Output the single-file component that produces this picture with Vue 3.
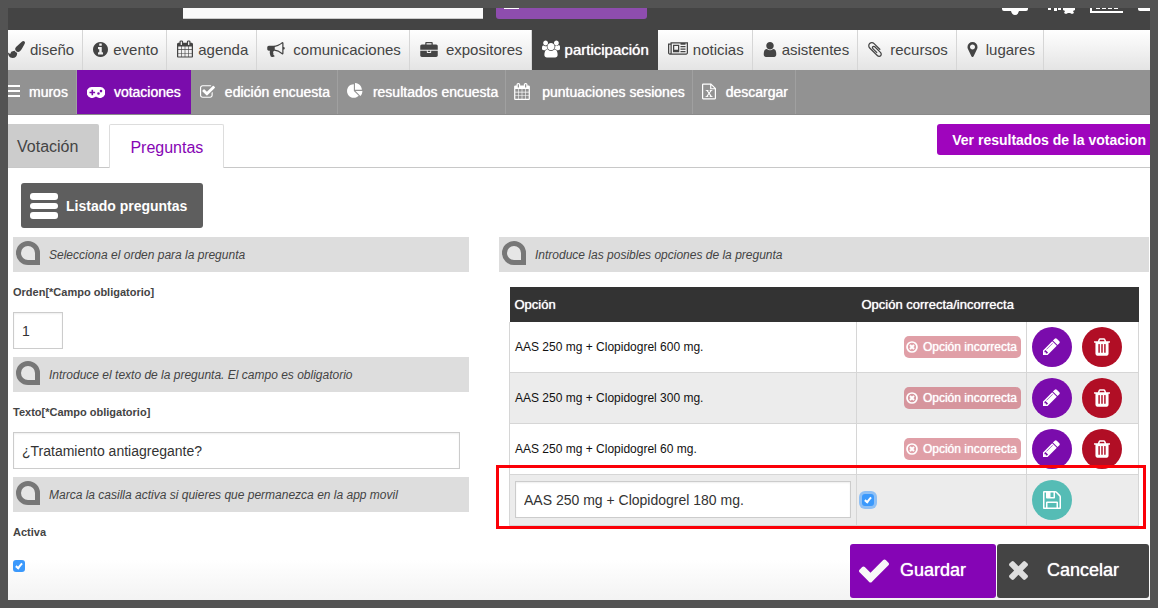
<script setup>
import { ref } from 'vue'

const icons = {
  brush: { box: '0 0 1792 1792', d: 'M1615 0q70 0 122.500 46.500t52.500 116.500q0 63-45 151-332 629-465 752-97 91-218 91-126 0-216.500-92.500t-90.500-219.500q0-128 92-212l638-579q59-54 130-54zm-909 1034q39 76 106.500 130t150.500 76l1 71q4 213-129.500 347t-348.500 134q-123 0-218-46.500t-152.500-127.500-86.500-183-29-220q7 5 41 30t62 44.500 59 36.500 46 17q41 0 55-37 25-66 57.500-112.500t69.500-76 88-47.500 103-25.500 125-10.500z' },
  info: { box: '128 128 1536 1536', d: 'M1152 1376v-160q0-14-9-23t-23-9h-96v-512q0-14-9-23t-23-9h-320q-14 0-23 9t-9 23v160q0 14 9 23t23 9h96v320h-96q-14 0-23 9t-9 23v160q0 14 9 23t23 9h448q14 0 23-9t9-23zm-128-896v-160q0-14-9-23t-23-9h-192q-14 0-23 9t-9 23v160q0 14 9 23t23 9h192q14 0 23-9t9-23zm640 416q0 209-103 385.500t-279.500 279.500-385.500 103-385.500-103-279.500-279.500-103-385.500 103-385.500 279.500-279.500 385.500-103 385.500 103 279.500 279.500 103 385.500z' },
  calendar: { box: '64 0 1664 1792', d: 'M192 1664h288v-288h-288v288zm352 0h320v-288h-320v288zm-352-352h288v-320h-288v320zm352 0h320v-320h-320v320zm-352-384h288v-288h-288v288zm736 736h320v-288h-320v288zm-384-736h320v-288h-320v288zm768 736h288v-288h-288v288zm-384-352h320v-320h-320v320zm-352-864v-288q0-13-9.500-22.500t-22.500-9.500h-64q-13 0-22.500 9.500t-9.500 22.500v288q0 13 9.500 22.500t22.500 9.500h64q13 0 22.500-9.500t9.500-22.500zm736 864h288v-320h-288v320zm-384-384h320v-288h-320v288zm384 0h288v-288h-288v288zm32-480v-288q0-13-9.500-22.500t-22.500-9.500h-64q-13 0-22.500 9.500t-9.500 22.500v288q0 13 9.500 22.500t22.500 9.500h64q13 0 22.500-9.500t9.500-22.500zm384-64v1280q0 52-38 90t-90 38h-1408q-52 0-90-38t-38-90v-1280q0-52 38-90t90-38h128v-96q0-66 47-113t113-47h64q66 0 113 47t47 113v96h384v-96q0-66 47-113t113-47h64q66 0 113 47t47 113v96h128q52 0 90 38t38 90z' },
  bullhorn: { box: '0 128 1792 1536', d: 'M1664 640q53 0 90.500 37.500t37.500 90.500-37.500 90.500-90.500 37.500v384q0 52-38 90t-90 38q-417-347-812-380-58 19-91 66t-31 100.500 40 92.500q-20 33-23 65.500t6 58 33.500 55 48 50 61.500 50.500q-29 58-111.500 83t-168.500 11.500-132-55.500q-7-23-29.500-87.500t-32-94.500-23-89-15-101 3.500-98.500 22-110.500h-122q-66 0-113-47t-47-113v-192q0-66 47-113t113-47h480q435 0 896-384 52 0 90 38t38 90v384zm-128 604v-954q-394 302-768 343v270q377 42 768 341z' },
  briefcase: { box: '0 0 1792 1536', d: 'M640 256h512v-128h-512v128zm1152 640v480q0 66-47 113t-113 47h-1472q-66 0-113-47t-47-113v-480h672v160q0 26 19 45t45 19h320q26 0 45-19t19-45v-160h672zm-768 0v128h-256v-128h256zm768-480v384h-1792v-384q0-66 47-113t113-47h352v-160q0-40 28-68t68-28h576q40 0 68 28t28 68v160h352q66 0 113 47t47 113z' },
  users: { box: '0 0 1920 1792', d: 'M593 896q-162 5-265 128h-134q-82 0-138-40.500t-56-118.500q0-353 124-353 6 0 43.500 21t97.500 42.500 119 21.500q67 0 133-23-5 37-5 66 0 159 93 293zm1071 637q0 120-73 189.500t-194 69.500h-874q-121 0-194-69.500t-73-189.500q0-53 3.500-103.500t14-109 26.500-108.500 43-97.500 62-81 85.500-53.500 111.500-20q10 0 43 21.500t73 48 107 48 135 21.500 135-21.500 107-48 73-48 43-21.500q61 0 111.500 20t85.500 53.500 62 81 43 97.500 26.500 108.500 14 109 3.500 103.500zm-1024-1277q0 106-75 181t-181 75-181-75-75-181 75-181 181-75 181 75 75 181zm704 384q0 159-112.500 271.500t-271.500 112.500-271.500-112.500-112.500-271.500 112.500-271.500 271.500-112.500 271.500 112.500 112.500 271.500zm576 225q0 78-56 118.500t-138 40.500h-134q-103-123-265-128 93-134 93-293 0-29-5-66 66 23 133 23 59 0 119-21.500t97.500-42.500 43.500-21q124 0 124 353zm-128-609q0 106-75 181t-181 75-181-75-75-181 75-181 181-75 181 75 75 181z' },
  news: { box: '0 256 2048 1408', d: 'M1024 640h-384v384h384v-384zm128 512v128h-640v-128h640zm0-640v640h-640v-640h640zm640 640v128h-512v-128h512zm0-256v128h-512v-128h512zm0-256v128h-512v-128h512zm0-128v-128h-512v128h512zm-1536 832v-832h-128v832q0 26 19 45t45 19 45-19 19-45zm1664 0v-960h-1536v960q0 33-11 64h1483q26 0 45-19t19-45zm128-1088v1088q0 80-56 136t-136 56h-1664q-80 0-136-56t-56-136v-960h256v-128h1792z' },
  user: { box: '256 128 1280 1536', d: 'M1536 1399q0 109-62.500 187t-150.500 78h-854q-88 0-150.500-78t-62.500-187q0-85 8.500-160.500t31.500-152 58.500-131 94-89 134.500-34.500q131 128 313 128t313-128q76 0 134.500 34.500t94 89 58.500 131 31.500 152 8.500 160.500zm-256-887q0 159-112.500 271.500t-271.500 112.500-271.500-112.500-112.500-271.500 112.500-271.500 271.500-112.500 271.500 112.500 112.500 271.500z' },
  clip: { box: '196 130 1400 1532', d: 'M1596 1385q0 117-79 196t-196 79q-135 0-235-100l-777-776q-113-115-113-271 0-159 110-270t269-111q158 0 273 113l605 606q10 10 10 22 0 16-30.500 46.500t-46.500 30.500q-13 0-23-10l-606-607q-79-77-181-77-106 0-179 75t-73 181q0 105 76 181l776 777q63 63 145 63 64 0 106-42t42-106q0-82-63-145l-581-581q-26-24-60-24-29 0-48 19t-19 48q0 32 25 59l410 410q10 10 10 22 0 16-31 47t-47 31q-12 0-22-10l-410-410q-63-61-63-149 0-82 57-139t139-57q88 0 149 63l581 581q100 98 100 235z' },
  marker: { box: '384 128 1024 1536', d: 'M1152 640q0-106-75-181t-181-75-181 75-75 181 75 181 181 75 181-75 75-181zm256 0q0 109-33 179l-364 774q-16 33-47.500 52t-67.500 19-67.500-19-46.500-52l-365-774q-33-70-33-179 0-212 150-362t362-150 362 150 150 362z' },
  bars: { box: '0 0 12 12', d: 'M-2 0h14v2h-14zM-2 5h14v2h-14zM-2 10h14v2h-14z' },
  gamepad: { box: '0 0 18 11', d: 'M5.500 0h7a5.500 5.500 0 1 1-3 9.800h-1a5.500 5.500 0 1 1-3-9.800zM4.500 2.700v2h-2v1.600h2v2h1.600v-2h2v-1.600h-2v-2zM11.500 5.200a1.300 1.300 0 1 0 0 2.600a1.300 1.300 0 1 0 0-2.600zM14 2.800a1.300 1.300 0 1 0 0 2.600a1.300 1.300 0 1 0 0-2.600z' },
  check: { box: '64 128 1664 1408', d: 'M1472 930v318q0 119-84.500 203.500t-203.500 84.500h-832q-119 0-203.500-84.500t-84.500-203.500v-832q0-119 84.500-203.500t203.500-84.500h832q63 0 117 25 15 7 18 23 3 17-9 29l-49 49q-10 10-23 10-3 0-9-2-23-6-45-6h-832q-66 0-113 47t-47 113v832q0 66 47 113t113 47h832q66 0 113-47t47-113v-254q0-13 9-22l64-64q10-10 23-10 6 0 12 3 20 8 20 29zm231-489l-814 814q-24 24-57 24t-57-24l-430-430q-24-24-24-57t24-57l110-110q24-24 57-24t57 24l263 263 647-647q24-24 57-24t57 24l110 110q24 24 24 57t-24 57z' },
  pie: { box: '0 0 1792 1792', d: 'M768 890l546 546q-106 108-247.500 168t-298.500 60q-209 0-385.500-103t-279.500-279.500-103-385.500 103-385.500 279.500-279.500 385.500-103v762zm187 6h773q0 157-60 298.500t-168 247.500zm709-128h-768v-768q209 0 385.500 103t279.500 279.500 103 385.500z' },
  sheet: { box: '0 0 15 17', d: 'M0 1.200q0-1.200 1.200-1.200h8.600l5.200 5v10.800q0 1.200-1.200 1.200h-12.600q-1.200 0-1.200-1.200zM1.300 1.300v14.400h12.400v-9.500h-5v-4.900zM10 1.700v3.200h3.200zM4 6.800h3v1h-.6l1.200 1.800 1.300-1.800h-.7v-1h2.900v1h-.8l-2 2.700 2.200 3h.8v1h-3.100v-1h.7l-1.400-2-1.400 2h.7v1h-3v-1h.9l2.200-3-2-2.700h-.9z' },
  pencil: { box: '128 128 1536 1536', d: 'M491 1536l91-91-235-235-91 91v107h128v128h107zm523-928q0-22-22-22-10 0-17 7l-542 542q-7 7-7 17 0 22 22 22 10 0 17-7l542-542q7-7 7-17zm-54-192l416 416-832 832h-416v-416zm683 96q0 53-37 90l-166 166-416-416 166-165q36-38 90-38 53 0 91 38l235 234q37 39 37 91z' },
  trash: { box: '192 128 1408 1536', d: 'M704 1376v-704q0-14-9-23t-23-9h-64q-14 0-23 9t-9 23v704q0 14 9 23t23 9h64q14 0 23-9t9-23zm256 0v-704q0-14-9-23t-23-9h-64q-14 0-23 9t-9 23v704q0 14 9 23t23 9h64q14 0 23-9t9-23zm256 0v-704q0-14-9-23t-23-9h-64q-14 0-23 9t-9 23v704q0 14 9 23t23 9h64q14 0 23-9t9-23zm-544-992h448l-48-117q-7-9-17-11h-317q-10 2-17 11zm928 32v64q0 14-9 23t-23 9h-96v948q0 83-47 143.500t-113 60.500h-832q-66 0-113-58.500t-47-141.500v-952h-96q-14 0-23-9t-9-23v-64q0-14 9-23t23-9h309l70-167q15-37 54-63t79-26h320q40 0 79 26t54 63l70 167h309q14 0 23 9t9 23z' },
  save: { box: '128 128 1536 1536', d: 'M512 1536h768v-384h-768v384zm896 0h128v-896q0-14-10-38.500t-20-34.500l-281-281q-10-10-34-20t-39-10v416q0 40-28 68t-68 28h-576q-40 0-68-28t-28-68v-416h-128v1280h128v-416q0-40 28-68t68-28h832q40 0 68 28t28 68v416zm-384-928v-320q0-13-9.500-22.500t-22.500-9.500h-192q-13 0-22.500 9.500t-9.500 22.500v320q0 13 9.500 22.500t22.500 9.500h192q13 0 22.500-9.500t9.500-22.500zm640 32v928q0 40-28 68t-68 28h-1344q-40 0-68-28t-28-68v-1344q0-40 28-68t68-28h928q40 0 88 20t76 48l280 280q28 28 48 76t20 88z' },
  tick: { box: '121 334 1550 1188', d: 'M1671 566q0 40-28 68l-724 724-136 136q-28 28-68 28t-68-28l-136-136-362-362q-28-28-28-68t28-68l136-136q28-28 68-28t68 28l294 295 656-657q28-28 68-28t68 28l136 136q28 28 28 68z' },
  cross: { box: '302 366 1188 1188', d: 'M1490 1322q0 40-28 68l-136 136q-28 28-68 28t-68-28l-294-294-294 294q-28 28-68 28t-68-28l-136-136q-28-28-28-68t28-68l294-294-294-294q-28-28-28-68t28-68l136-136q28-28 68-28t68 28l294 294 294-294q28-28 68-28t68 28l136 136q28 28 28 68t-28 68l-294 294 294 294q28 28 28 68z' },
}

const sections = [
  { label: 'diseño', icon: 'brush', w: 17, h: 17 },
  { label: 'evento', icon: 'info', w: 15, h: 15 },
  { label: 'agenda', icon: 'calendar', w: 16, h: 18 },
  { label: 'comunicaciones', icon: 'bullhorn', w: 18, h: 15, wide: true },
  { label: 'expositores', icon: 'briefcase', w: 18, h: 15, wide: true },
  { label: 'participación', icon: 'users', w: 18, h: 18, active: true },
  { label: 'noticias', icon: 'news', w: 20, h: 14 },
  { label: 'asistentes', icon: 'user', w: 14, h: 15 },
  { label: 'recursos', icon: 'clip', w: 14, h: 15, wide: true },
  { label: 'lugares', icon: 'marker', w: 11, h: 15, wide: true },
]

const tools = [
  { label: 'muros', icon: 'bars', w: 12, h: 12 },
  { label: 'votaciones', icon: 'gamepad', w: 18, h: 11, active: true },
  { label: 'edición encuesta', icon: 'check', w: 15, h: 13 },
  { label: 'resultados encuesta', icon: 'pie', w: 16, h: 16 },
  { label: 'puntuaciones sesiones', icon: 'calendar', w: 16, h: 17, wide: true },
  { label: 'descargar', icon: 'sheet', w: 14, h: 17 },
]

const options = [
  'AAS 250 mg + Clopidogrel 600 mg.',
  'AAS 250 mg + Clopidogrel 300 mg.',
  'AAS 250 mg + Clopidogrel 60 mg.',
]

const orden = ref('1')
const texto = ref('¿Tratamiento antiagregante?')
const activa = ref(true)
const nueva = ref('AAS 250 mg + Clopidogrel 180 mg.')
const correcta = ref(true)
const search = ref('')
</script>

<template>
  <div class="page">
    <header class="top">
      <input v-model="search" class="search" type="text" aria-label="Buscar" />
      <button class="top-button" type="button" aria-label="Buscar"><span></span></button>
      <svg class="top-icons" width="148" height="7" viewBox="0 0 148 7" fill="#fff" aria-hidden="true">
        <path d="M0 0h26v1q0 2-2 2h-7q-1 4-4 4t-4-4h-7q-2 0-2-2z" />
        <path d="M46 0h3v2h-3zM52 0h3v3h-3zM56 0h3v2h-3z" />
        <path d="M61 0h12v2l-2 1 1 2-2 1-2-1h-2l-2 1-2-1 1-2-2-1z" />
        <path d="M88 0h2v3h31v2h-33zM94 0h4v1h-4zM100 0h4v1h-4zM106 0h4v1h-4zM112 0h4v1h-4z" />
        <path d="M136 0h12v3h-10q-2 0-2-2z" />
      </svg>
    </header>

    <nav class="sections" aria-label="Secciones">
      <a v-for="s in sections" :key="s.label" href="#" :class="{ active: s.active, wide: s.wide }">
        <svg :width="s.w" :height="s.h" :viewBox="icons[s.icon].box" aria-hidden="true"><path :d="icons[s.icon].d" /></svg>
        <span>{{ s.label }}</span>
      </a>
    </nav>

    <nav class="tools" aria-label="Participación">
      <a v-for="t in tools" :key="t.label" href="#" :class="{ active: t.active, wide: t.wide }">
        <svg :width="t.w" :height="t.h" :viewBox="icons[t.icon].box" aria-hidden="true"><path fill-rule="evenodd" :d="icons[t.icon].d" /></svg>
        <span>{{ t.label }}</span>
      </a>
    </nav>

    <div class="tabs">
      <a href="#" class="tab">Votación</a>
      <a href="#" class="tab current">Preguntas</a>
      <button type="button" class="results">Ver resultados de la votacion</button>
    </div>

    <main class="content">
      <button type="button" class="list-button">
        <svg width="28" height="26" viewBox="0 0 28 26" fill="#fff" aria-hidden="true">
          <rect width="28" height="7" rx="3" /><rect y="10" width="28" height="6" rx="3" /><rect y="19" width="28" height="7" rx="3" />
        </svg>
        Listado preguntas
      </button>

      <div class="columns">
        <section class="form">
          <p class="hint">
            <svg width="24" height="24" viewBox="0 0 24 24" aria-hidden="true"><path d="M12 2.500h0a9.500 9.500 0 0 1 9.500 9.500v9.500h-9.500a9.500 9.500 0 0 1 0-19z" /></svg>
            Selecciona el orden para la pregunta
          </p>
          <label for="orden">Orden[*Campo obligatorio]</label>
          <input id="orden" v-model="orden" class="field short" type="text" />

          <p class="hint">
            <svg width="24" height="24" viewBox="0 0 24 24" aria-hidden="true"><path d="M12 2.500h0a9.500 9.500 0 0 1 9.500 9.500v9.500h-9.500a9.500 9.500 0 0 1 0-19z" /></svg>
            Introduce el texto de la pregunta. El campo es obligatorio
          </p>
          <label for="texto">Texto[*Campo obligatorio]</label>
          <input id="texto" v-model="texto" class="field long" type="text" />

          <p class="hint">
            <svg width="24" height="24" viewBox="0 0 24 24" aria-hidden="true"><path d="M12 2.500h0a9.500 9.500 0 0 1 9.500 9.500v9.500h-9.500a9.500 9.500 0 0 1 0-19z" /></svg>
            Marca la casilla activa si quieres que permanezca en la app movil
          </p>
          <label for="activa">Activa</label>
          <input id="activa" v-model="activa" class="tickbox" type="checkbox" />
        </section>

        <section class="answers">
          <p class="hint">
            <svg width="24" height="24" viewBox="0 0 24 24" aria-hidden="true"><path d="M12 2.500h0a9.500 9.500 0 0 1 9.500 9.500v9.500h-9.500a9.500 9.500 0 0 1 0-19z" /></svg>
            Introduce las posibles opciones de la pregunta
          </p>
          <div class="table-wrap">
            <table>
              <colgroup><col /><col class="col-state" /><col class="col-actions" /></colgroup>
              <thead>
                <tr><th>Opción</th><th colspan="2">Opción correcta/incorrecta</th></tr>
              </thead>
              <tbody>
                <tr v-for="o in options" :key="o">
                  <td>{{ o }}</td>
                  <td class="state">
                    <span class="badge">
                      <svg width="12" height="12" viewBox="0 0 12 12" fill="none" stroke="#fff" aria-hidden="true">
                        <circle cx="6" cy="6" r="5" stroke-width="1.700" /><path d="M4 4l4 4M8 4l-4 4" stroke-width="2" />
                      </svg>
                      Opción incorrecta
                    </span>
                  </td>
                  <td>
                    <div class="row-actions">
                      <button type="button" class="round edit" aria-label="Editar">
                        <svg width="17" height="17" :viewBox="icons.pencil.box"><path :d="icons.pencil.d" /></svg>
                      </button>
                      <button type="button" class="round remove" aria-label="Eliminar">
                        <svg width="16" height="18" :viewBox="icons.trash.box"><path :d="icons.trash.d" /></svg>
                      </button>
                    </div>
                  </td>
                </tr>
                <tr>
                  <td><input v-model="nueva" class="field" type="text" aria-label="Opción" /></td>
                  <td class="pick"><input v-model="correcta" class="tickbox focused" type="checkbox" aria-label="Opción correcta" /></td>
                  <td>
                    <div class="row-actions">
                      <button type="button" class="round save" aria-label="Guardar opción">
                        <svg width="18" height="18" :viewBox="icons.save.box"><path :d="icons.save.d" /></svg>
                      </button>
                    </div>
                  </td>
                </tr>
              </tbody>
            </table>
            <div class="highlight"></div>
          </div>

          <div class="actions">
            <button type="button" class="submit">
              <svg width="30" height="24" :viewBox="icons.tick.box"><path :d="icons.tick.d" /></svg>
              <span>Guardar</span>
            </button>
            <button type="button" class="cancel">
              <svg width="19" height="19" :viewBox="icons.cross.box"><path :d="icons.cross.d" /></svg>
              <span>Cancelar</span>
            </button>
          </div>
        </section>
      </div>
    </main>
  </div>
</template>

<style>
body {
  background: #535353;
}
</style>

<style scoped>
* {
  box-sizing: border-box;
}
.page {
  margin: 8px;
  min-height: calc(100vh - 16px);
  overflow: hidden;
  background: linear-gradient(to top, #f3f3f3, #fff 40px);
  color: #444;
  font-family: "Liberation Sans", Arial, Helvetica, sans-serif;
}
button,
input {
  font-family: inherit;
  margin: 0;
}
button {
  border: 0;
  padding: 0;
}
a {
  text-decoration: none;
}

.top {
  display: flex;
  align-items: flex-start;
  height: 22px;
  padding-left: 175px;
  background: #444;
}
.search {
  width: 300px;
  height: 11px;
  border: 0;
  border-bottom: 1px solid #ccc;
  background: #fafafa;
}
.top-button {
  display: flex;
  align-items: flex-start;
  width: 151px;
  height: 11px;
  margin-left: 13px;
  padding-left: 8px;
  border-radius: 0 0 3px 3px;
  background: #8e4dae;
}
.top-button span {
  width: 15px;
  height: 1px;
  background: #fff;
}
.top-icons {
  margin-left: auto;
}

.sections {
  display: flex;
  height: 40px;
  background: linear-gradient(#fff, #e4e4e4);
}
.sections a,
.tools a {
  display: flex;
  align-items: center;
  flex: none;
  white-space: nowrap;
}
.sections a {
  gap: 5px;
  padding: 0 8px 2px 10px;
  border-right: 1px solid #d6d6d6;
  color: #444;
  font-size: 15px;
}
.sections a.wide {
  gap: 8px;
}
.sections a:first-child,
.tools a:first-child {
  padding-left: 0;
}
.sections svg,
.tools svg {
  flex: none;
  fill: currentColor;
}
.sections a.active {
  padding: 0 9px 2px 10px;
  border: 0;
  background: #444;
  color: #fff;
  text-shadow: 0 0 1px #fff;
}

.tools {
  display: flex;
  height: 45px;
  border-bottom: 1px solid #8a8a8a;
  background: #929292;
}
.tools a {
  gap: 10px;
  padding: 0 7px 0 9px;
  border-right: 1px solid #a0a0a0;
  color: #fff;
  font-size: 14px;
  text-shadow: 0 0 1px #fff;
}
.tools svg {
  margin-bottom: 2px;
}
.tools a.wide {
  gap: 12px;
  padding-left: 8px;
}
.tools a:first-child {
  gap: 9px;
  padding-right: 8px;
}
.tools a.active {
  gap: 9px;
  padding: 0 10px;
  border: 0;
  background: #7a0cac;
}
.tools a.active svg {
  margin-bottom: 0;
}

.tabs {
  display: flex;
  align-items: flex-start;
  height: 53px;
  padding-top: 9px;
  border-bottom: 1px solid #c8c8c8;
}
.tab {
  height: 43px;
  padding: 0 21px 0 9px;
  border-radius: 0 2px 0 0;
  background: #ccc;
  color: #444;
  font-size: 16px;
  line-height: 46px;
}
.tab.current {
  height: 44px;
  margin-left: 10px;
  padding: 0 20px;
  border: 1px solid #ddd;
  border-bottom: 0;
  border-radius: 2px 2px 0 0;
  background: #fff;
  color: #8605b4;
}
.results {
  height: 31px;
  margin-left: auto;
  padding: 0 4px 0 15px;
  border-radius: 3px 0 0 3px;
  background: #9f05bd;
  color: #fff;
  font-size: 14px;
  font-weight: bold;
  white-space: nowrap;
}

.content {
  padding: 15px 1px 2px 5px;
}
.list-button {
  display: flex;
  align-items: center;
  gap: 8px;
  height: 45px;
  margin-left: 8px;
  padding: 0 16px 0 9px;
  border-radius: 3px;
  background: #5e5e5e;
  color: #fff;
  font-size: 14px;
  font-weight: bold;
}
.columns {
  display: grid;
  grid-template-columns: 456fr 650fr;
  gap: 30px;
  margin-top: 9px;
}
.hint {
  display: flex;
  align-items: center;
  gap: 9px;
  height: 35px;
  margin: 0;
  padding: 0 3px;
  background: #ddd;
  color: #444;
  font-size: 12px;
  font-style: italic;
}
.hint svg {
  flex: none;
  margin-bottom: 3px;
  fill: #e6e6e6;
  stroke: #777;
  stroke-width: 5px;
}
.form {
  display: flex;
  flex-direction: column;
  align-items: flex-start;
}
.form .hint {
  align-self: stretch;
}
.form label {
  font-size: 11px;
  font-weight: bold;
  line-height: 40px;
}
.field {
  display: block;
  width: 100%;
  height: 37px;
  padding: 0 8px;
  border: 1px solid #ccc;
  border-radius: 0;
  background: #fff;
  box-shadow: inset 0 1px 2px #eee;
  color: #333;
  font-size: 14px;
}
.field.short {
  width: 50px;
}
.field.long {
  width: 98%;
}
.form .field {
  margin-bottom: 8px;
}
.tickbox {
  appearance: none;
  position: relative;
  flex: none;
  display: block;
  width: 12px;
  height: 12px;
  border-radius: 3px;
}
.tickbox:checked {
  background: #3b99fc;
}
.tickbox:not(:checked) {
  border: 1px solid #aaa;
}
.tickbox:checked::after {
  content: "";
  position: absolute;
  left: 4px;
  top: 2px;
  width: 2px;
  height: 5px;
  border: solid #fff;
  border-width: 0 2px 2px 0;
  transform: rotate(40deg);
}
.tickbox.focused {
  box-shadow: 0 0 0 3px #8fc0f5;
}
.form .tickbox {
  margin-top: 8px;
}

.table-wrap {
  position: relative;
  margin: 15px 10px 0;
}
table {
  width: 100%;
  border-collapse: collapse;
  table-layout: fixed;
}
.col-state {
  width: 170px;
}
.col-actions {
  width: 112px;
}
th {
  height: 35px;
  padding: 0 5px;
  background: #333;
  color: #fff;
  font-size: 13px;
  font-weight: normal;
  text-align: left;
  text-shadow: 0 0 1px #fff;
}
td {
  height: 51px;
  padding: 0 5px;
  border: 1px solid #d6d6d6;
  color: #111;
  font-size: 12px;
}
thead + tbody tr:first-child td {
  height: 50px;
  border-top: 0;
}
tbody tr:nth-child(even) {
  background: #ececec;
}
.badge {
  display: flex;
  align-items: center;
  gap: 5px;
  width: max-content;
  height: 22px;
  margin-left: auto;
  padding: 0 4px 0 2px;
  border-radius: 5px;
  background: rgba(189, 51, 68, 0.47);
  color: #fff;
  text-shadow: 0 0 1px #fff;
}
.row-actions {
  display: flex;
  gap: 10px;
}
.round {
  display: flex;
  align-items: center;
  justify-content: center;
  width: 40px;
  height: 40px;
  border-radius: 50%;
}
.round svg {
  fill: #fff;
}
.edit {
  background: #7a0cac;
}
.remove {
  background: #b10e25;
}
.save {
  background: #55bcb5;
}
.highlight {
  position: absolute;
  right: -7px;
  bottom: -3px;
  left: -13px;
  height: 64px;
  border: 3px solid #fb0007;
  pointer-events: none;
}

.actions {
  display: flex;
  justify-content: flex-end;
  gap: 1px;
  margin-top: 18px;
}
.actions button {
  display: flex;
  align-items: center;
  height: 54px;
  border-radius: 3px;
  color: #fff;
  font-size: 18px;
  text-shadow: 0 0 1px #fff;
}
.submit {
  gap: 11px;
  padding: 0 30px 0 9px;
  background: #8505b5;
}
.submit svg {
  fill: #f8f8f8;
}
.cancel {
  gap: 19px;
  padding: 0 30px 0 12px;
  background: #444;
}
.cancel svg {
  fill: #ddd;
}
</style>
